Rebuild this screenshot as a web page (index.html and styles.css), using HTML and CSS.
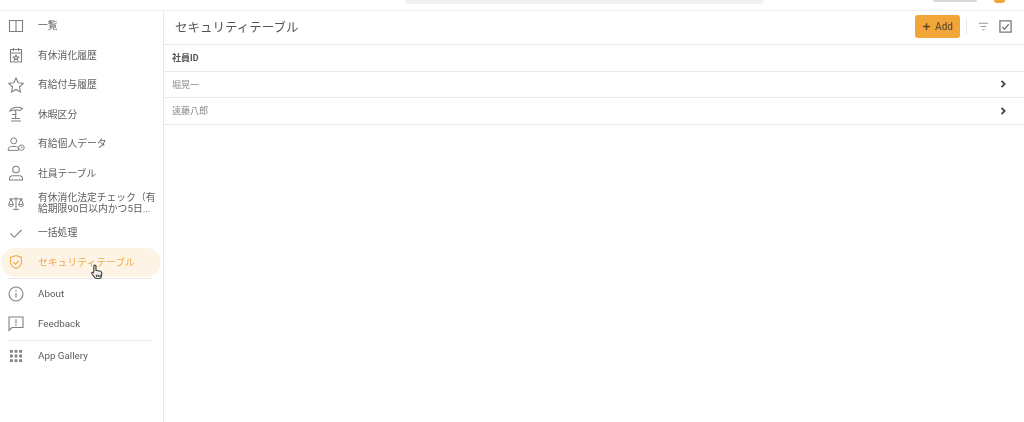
FILE: index.html
```html
<!DOCTYPE html>
<html lang="ja">
<head>
<meta charset="utf-8">
<title>セキュリティテーブル</title>
<link rel="stylesheet" href="styles.css">
</head>
<body>
<div class="app">
  <header class="topbar">
    <div class="search"></div>
    <div class="pill"></div>
    <div class="avatar"></div>
  </header>
  <div class="body">
    <nav class="side">
      <a class="item"><svg class="ic" viewBox="0 0 20 20"><path d="M3.500 4.500h13v11h-13zM10 4.500v11"/></svg><span>一覧</span></a>
      <a class="item"><svg class="ic" viewBox="0 0 20 20"><path d="M4.500 4.500h11v12.500h-11zM4.500 8h11M7.500 3v3M12.500 3v3"/><path d="M10 10.200l.9 1.700 1.800.2-1.300 1.200.3 1.800-1.700-.9-1.700.9.300-1.800-1.300-1.200 1.800-.2z"/></svg><span>有休消化履歴</span></a>
      <a class="item"><svg class="ic" viewBox="0 0 20 20"><path d="M10 3l2.200 4.700 5.100.6-3.800 3.500 1 5.100L10 14.400l-4.500 2.500 1-5.100-3.800-3.500 5.100-.6z"/></svg><span>有給付与履歴</span></a>
      <a class="item"><svg class="ic" viewBox="0 0 20 20"><path d="M4 7c1-3.500 8-5 12.500-2.500L14 6.500l-3-.5C8.500 5.800 6 6 4 7zM9.500 6.500c.5 2 .5 5 0 7.500M5.500 14.500h8.500M5 17h10M6 10.500h3.500"/></svg><span>休暇区分</span></a>
      <a class="item"><svg class="ic ic-wide" viewBox="0 0 22 20"><circle cx="8.500" cy="6.500" r="3.300"/><path d="M2.500 17v-1.500c0-1.800 1.800-2.800 3.500-2.800h4.500c1.500 0 2.700.7 3 2.300V17z"/><circle cx="17" cy="14" r="3"/><path d="M17 12.700V14h1.200"/></svg><span>有給個人データ</span></a>
      <a class="item"><svg class="ic" viewBox="0 0 20 20"><circle cx="10" cy="6.500" r="3.300"/><path d="M3.500 17v-1.500c0-1.800 1.800-2.800 3.500-2.800h6c1.700 0 3.500 1 3.500 2.800V17z"/></svg><span>社員テーブル</span></a>
      <a class="item item-long"><svg class="ic ic-wide" viewBox="0 0 22 20"><path d="M11 3.500v13.500M7.500 17h7M3.500 5.500h15M5.500 5.500L3 11.500h5zM16.500 5.500L14 11.500h5zM3 11.500c0 3.200 5 3.200 5 0M14 11.500c0 3.200 5 3.200 5 0"/></svg><span class="long-text">有休消化法定チェック（有給期限90日以内かつ5日...</span></a>
      <a class="item"><svg class="ic" viewBox="0 0 20 20"><path d="M4.500 10.500l3.800 3.800 7.200-7.300"/></svg><span>一括処理</span></a>
      <a class="item active"><svg class="ic" viewBox="0 0 20 20"><path d="M10 3.500l5.500 2v4.500c0 3.200-2.500 5.200-5.500 6.500-3-1.300-5.500-3.300-5.500-6.500V5.500z"/><path d="M7.300 10l2.100 2.100 3.400-3.500"/></svg><span>セキュリティテーブル</span></a>
      <div class="sep"></div>
      <a class="item"><svg class="ic" viewBox="0 0 20 20"><circle cx="10" cy="10" r="7"/><path d="M10 9v4.500M10 6.300v1.400"/></svg><span>About</span></a>
      <a class="item"><svg class="ic" viewBox="0 0 20 20"><path d="M3 4h14v10.500H6l-3 3zM10 6.300v4.200M10 11.500V13"/></svg><span>Feedback</span></a>
      <div class="sep sep-low"></div>
      <a class="item"><svg class="ic ic-fill" viewBox="0 0 20 20"><path d="M4 4h2.800v2.800H4zM8.600 4h2.800v2.800H8.600zM13.200 4H16v2.800h-2.800zM4 8.600h2.800v2.800H4zM8.600 8.600h2.800v2.800H8.600zM13.200 8.600H16v2.800h-2.800zM4 13.200h2.800V16H4zM8.600 13.200h2.800V16H8.600zM13.200 13.200H16V16h-2.800z"/></svg><span>App Gallery</span></a>
    </nav>
    <main class="main">
      <div class="head">
        <h1>セキュリティテーブル</h1>
        <button class="add"><svg viewBox="0 0 12 12"><path d="M6 1.500v9M1.500 6h9"/></svg>Add</button>
        <span class="vline"></span>
        <svg class="tool" viewBox="0 0 14 14"><path d="M2 3.500h10M4 7h6M5.800 10.500h2.400"/></svg>
        <svg class="tool check" viewBox="0 0 14 14"><path d="M1 1h12v12H1zM3.500 7.500l2.500 2.500 4.500-5.500"/></svg>
      </div>
      <div class="row row-head">社員ID</div>
      <div class="row"><span>堀晃一</span><svg class="chev" viewBox="0 0 10 10"><path d="M3.500 1.800L6.700 5 3.500 8.200"/></svg></div>
      <div class="row"><span>遠藤八郎</span><svg class="chev" viewBox="0 0 10 10"><path d="M3.500 1.800L6.700 5 3.500 8.200"/></svg></div>
    </main>
  </div>
  <svg class="cursor" viewBox="0 0 14 18"><path d="M4 8V2.500a1.200 1.200 0 0 1 2.400 0V7l5 1.200c1 .3 1.600 1 1.500 2l-.6 4.300c-.2 1-1 1.800-2 1.800H7c-.8 0-1.400-.4-1.900-1L1.800 11c-.7-1 .6-2.300 1.600-1.300z"/><path d="M7 12v2.500M9 12v2.500M11 12v2.500"/></svg>
</div>
</body>
</html>
```
FILE: styles.css
```css
* { box-sizing: border-box; }
html, body { margin: 0; height: 100%; overflow: hidden; background: #fff; }
body { font-family: "Roboto", "Noto Sans CJK JP", sans-serif; color: #555; }
.app { position: relative; width: 1024px; height: 422px; display: flex; flex-direction: column; filter: blur(.35px); }
.topbar { height: 11px; flex: none; border-bottom: 1px solid #eee; display: flex; align-items: flex-start; }
.search { width: 359px; height: 4px; margin-left: 405px; background: #f1f1f1; border-radius: 0 0 4px 4px; }
.pill { width: 44px; height: 2px; margin-left: 169px; background: #d8d8d8; border-radius: 0 0 4px 4px; }
.avatar { width: 11px; height: 3px; margin-left: 17px; background: #f2a63a; border-radius: 0 0 6px 6px; }
.body { flex: 1; display: flex; min-height: 0; }
.side { width: 164px; flex: none; border-right: 1px solid #e8e8e8; padding: 0 2px 0 1px; }
.item { display: flex; align-items: center; height: 29.500px; padding-left: 5px; font-size: 9.800px; line-height: 11px; color: #5c5c5c; border-radius: 16px; }
.item span { margin-left: 12px; }
.item-long { height: 30px; }
.long-text { width: 121px; }
.ic { width: 20px; height: 20px; flex: none; fill: none; stroke: #808080; stroke-width: 1.100; }
.ic-fill { fill: #808080; stroke: none; }
.active { background: #fdf4e5; color: #eba950; height: 28.500px; margin-top: .500px; }
.active .ic { stroke: #eba950; }
.sep { height: 1px; margin: 1.500px 9px 0 7px; background: #e8e8e8; }
.sep-low { margin-top: 2px; }
.main { flex: 1; min-width: 0; }
.head { height: 34px; display: flex; align-items: center; padding: 0 12px 2px 11px; border-bottom: 1px solid #e8e8e8; }
h1 { margin: 0 auto 0 0; font-size: 12.500px; font-weight: 400; color: #555; }
.add { display: flex; align-items: center; justify-content: center; gap: 4px; width: 45px; height: 23px; border: 0; border-radius: 3px; background: #f2a63a; color: #6b5430; font: 500 10px "Roboto", sans-serif; padding: 0; }
.add svg { width: 9px; height: 9px; fill: none; stroke: #5b4520; stroke-width: 1.800; }
.vline { width: 1px; height: 15px; background: #e8e8e8; margin: 0 10px 0 6px; }
.tool { width: 13px; height: 13px; flex: none; fill: none; stroke: #999; stroke-width: 1.200; }
.check { margin-left: 9px; stroke: #777; stroke-width: 1.400; }
.row { height: 26.500px; display: flex; align-items: center; justify-content: space-between; padding: 0 16px 0 8px; font-size: 9px; color: #8a8a8a; border-bottom: 1px solid #e8e8e8; }
.row-head { font-weight: 700; color: #555; }
.chev { width: 10px; height: 10px; fill: none; stroke: #444; stroke-width: 1.800; }
.cursor { position: absolute; left: 90px; top: 264px; width: 13px; height: 16px; fill: #f0ede8; stroke: #444; stroke-width: 1.300; }
```
